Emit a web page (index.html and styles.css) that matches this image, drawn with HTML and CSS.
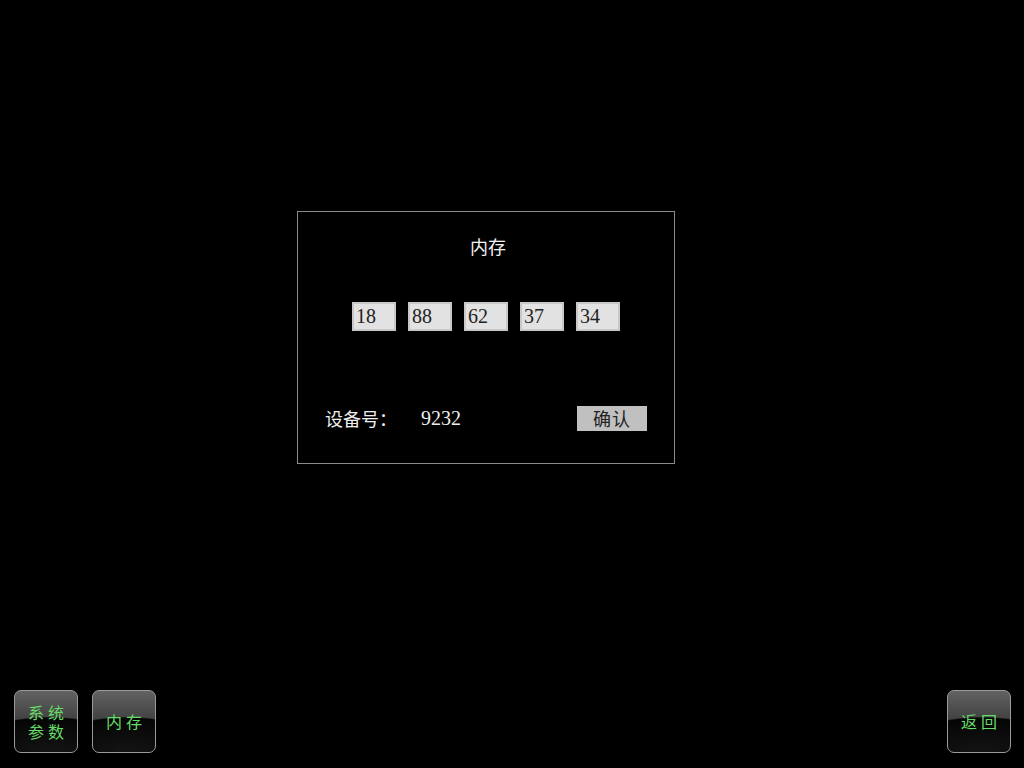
FILE: index.html
```html
<!DOCTYPE html>
<html lang="zh">
<head>
<meta charset="utf-8">
<title>内存</title>
<link rel="stylesheet" href="styles.css">
</head>
<body>
<div class="screen">
  <main class="main">
    <section class="panel">
      <h1 class="title">内存</h1>
      <div class="inputs">
        <div class="field">18</div>
        <div class="field">88</div>
        <div class="field">62</div>
        <div class="field">37</div>
        <div class="field">34</div>
      </div>
      <div class="device-row">
        <span class="label">设备号：</span>
        <span class="device-num">9232</span>
        <button class="confirm">确认</button>
      </div>
    </section>
  </main>
  <footer class="footer">
    <button class="nav-btn"><span class="two-line"><span>系统</span><span>参数</span></span></button>
    <button class="nav-btn"><span>内存</span></button>
    <button class="nav-btn push-right"><span>返回</span></button>
  </footer>
</div>
</body>
</html>
```

FILE: styles.css
```css
html, body {
  margin: 0;
  padding: 0;
  background: #000;
}
.screen {
  width: 1024px;
  height: 768px;
  display: flex;
  flex-direction: column;
  font-family: "Noto Sans CJK SC", "Liberation Serif", serif;
}
.main {
  flex: 1;
}
.panel {
  margin: 211px 0 0 297px;
  width: 376px;
  height: 251px;
  border: 1px solid #8a8a8a;
  display: flex;
  flex-direction: column;
}
.title {
  margin: 22px 0 0 0;
  font-size: 18px;
  font-weight: normal;
  line-height: 24px;
  height: 24px;
  color: #f2f2f2;
  text-align: center;
  padding-left: 4px;
}
.inputs {
  display: flex;
  gap: 12px;
  margin-top: 44px;
  padding-left: 54px;
}
.field {
  width: 38px;
  height: 25px;
  border: 2px solid #c8c8c8;
  background: #e2e2e2;
  color: #222;
  font-family: "Liberation Serif", serif;
  font-size: 20px;
  line-height: 25px;
  padding-left: 2px;
}
.device-row {
  display: flex;
  align-items: center;
  margin-top: 75px;
  padding: 0 27px 0 27px;
  height: 25px;
}
.label {
  font-size: 18px;
  color: #eee;
  line-height: 25px;
}
.device-num {
  font-family: "Liberation Serif", serif;
  font-size: 20px;
  color: #eee;
  margin-left: 24px;
}
.confirm {
  margin-left: auto;
  width: 70px;
  height: 25px;
  border: none;
  padding: 0;
  background: #c0c0c0;
  color: #222;
  font-family: "Noto Sans CJK SC", sans-serif;
  font-size: 18px;
  line-height: 25px;
  letter-spacing: 1px;
}
.footer {
  display: flex;
  gap: 14px;
  padding: 0 13px 15px 14px;
}
.nav-btn {
  width: 64px;
  height: 63px;
  padding: 0;
  border: 1px solid #9a9a9a;
  border-radius: 7px;
  background:
    radial-gradient(ellipse 140% 58% at 55% 100%, #141414 0%, #050505 96%, transparent 100%),
    linear-gradient(#626262, #3c3c3c 55%, #1a1a1a);
  color: #66dd66;
  font-family: "Noto Sans CJK SC", sans-serif;
  font-size: 16px;
  line-height: 19px;
  letter-spacing: 4px;
  display: flex;
  align-items: center;
  justify-content: center;
  box-sizing: border-box;
}
.nav-btn > span {
  padding-left: 4px;
}
.two-line {
  display: flex;
  flex-direction: column;
}
.two-line span {
  display: block;
  height: 19px;
  line-height: 19px;
}
.push-right {
  margin-left: auto;
}
```
